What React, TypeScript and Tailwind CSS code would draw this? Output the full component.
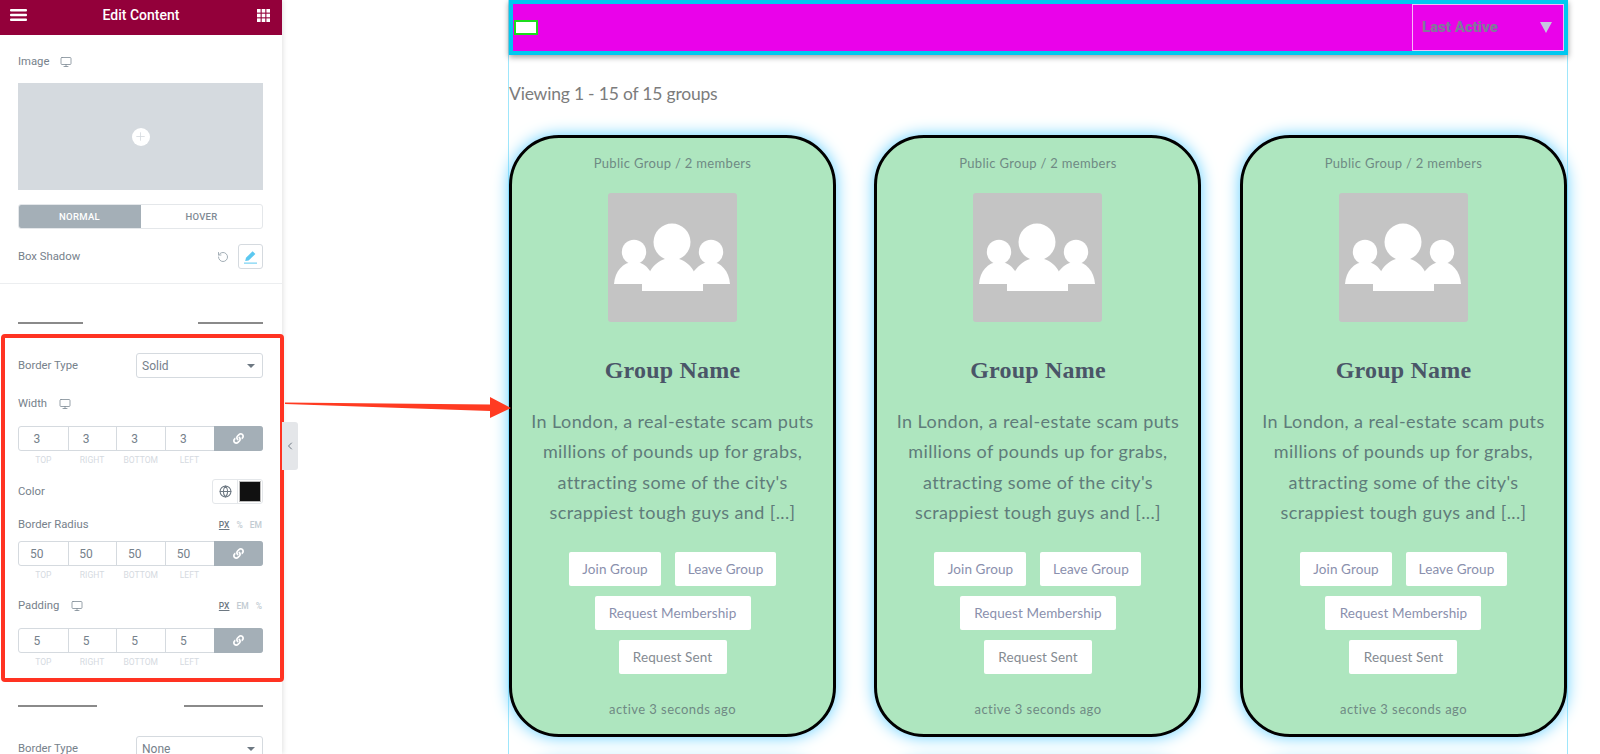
import { Monitor, RotateCcw, Globe, ChevronLeft, Plus } from "lucide-react";
import { FaLink } from "react-icons/fa";

const label = "text-[11.3px] leading-4 text-[#76818b]";

function Dim({ v }: { v: string }) {
  const names = ["TOP", "RIGHT", "BOTTOM", "LEFT"];
  return (
    <div>
      <div className="flex h-[25px] w-[245px] rounded-[3px] border border-[#d5dadf] text-[12px] text-[#76818b]">
        {names.map((n, i) => (
          <div key={n} className={`flex w-[48.7px] items-center justify-center pr-[13px] ${i > 0 ? "border-l border-[#d5dadf]" : ""}`}>
            {v}
          </div>
        ))}
        <div className="-my-px -mr-px flex flex-1 items-center justify-center rounded-r-[3px] bg-[#a4afb7] text-white">
          <FaLink size={11} />
        </div>
      </div>
      <div className="ml-px mt-[4px] flex h-[11px] w-[245px] items-center text-[8.5px] leading-none text-[#d5dadf]">
        {names.map((n) => (
          <div key={n} className="w-[48.7px] text-center">{n}</div>
        ))}
      </div>
    </div>
  );
}

function SelectBox({ v }: { v: string }) {
  return (
    <div className="flex h-[25px] w-[127px] items-center justify-between rounded-[3px] border border-[#d5dadf] pl-[5px] pr-[7px] text-[12px] text-[#76818b]">
      {v}
      <span className="h-0 w-0 border-x-[4px] border-t-[4px] border-x-transparent border-t-[#6d7882]" />
    </div>
  );
}

function Divider({ a, b }: { a: string; b: string }) {
  return (
    <div className="flex justify-between pl-[18px] pr-[19px]">
      <div className={`h-[2px] bg-[#8a8a8a] ${a}`} />
      <div className={`h-[2px] bg-[#8a8a8a] ${b}`} />
    </div>
  );
}

function Units({ items }: { items: string[] }) {
  return (
    <div className="flex gap-[7px] pr-[1px] text-[8.5px] font-medium text-[#c2cbd2]">
      {items.map((u, i) => (
        <span key={u} className={i === 0 ? "text-[#6d7882] underline" : ""}>{u}</span>
      ))}
    </div>
  );
}

function Sidebar() {
  return (
    <aside className="relative z-10 h-[754px] w-[282px] shrink-0 bg-white font-['Roboto',sans-serif] shadow-[1px_0_5px_rgba(0,0,0,0.12)]">
      <header className="flex h-[35px] items-center justify-between bg-[#93003a] pb-[5px] pl-[10px] pr-[12px] text-white">
        <svg width="17" height="12" viewBox="0 0 17 12" fill="white">
          <rect width="17" height="2.4" rx="1" />
          <rect y="4.8" width="17" height="2.4" rx="1" />
          <rect y="9.6" width="17" height="2.4" rx="1" />
        </svg>
        <span className="mr-[2px] text-[14px] font-medium">Edit Content</span>
        <svg width="13" height="13" viewBox="0 0 13 13" fill="white">
          {[0, 4.7, 9.4].flatMap((x) =>
            [0, 4.7, 9.4].map((y) => <rect key={`${x}-${y}`} x={x} y={y} width="3.6" height="3.6" />)
          )}
        </svg>
      </header>

      <div className="pl-[18px] pr-[19px] pt-[19px]">
        <div className={`flex items-center gap-[11px] ${label}`}>
          Image <Monitor size={12} strokeWidth={1.6} className="text-[#7d8a94]" />
        </div>
        <div className="mt-[13px] flex h-[107px] w-[245px] items-center justify-center bg-[#d5dadf]">
          <span className="flex h-[18px] w-[18px] items-center justify-center rounded-full bg-white text-[#d5dadf]">
            <Plus size={13} strokeWidth={1.5} />
          </span>
        </div>
        <div className="mt-[14px] flex h-[25px] w-[245px] overflow-hidden rounded-[3px] border border-[#e4e7ea] text-[9.5px] font-medium tracking-[0.3px]">
          <div className="-my-px -ml-px flex w-[123px] items-center justify-center bg-[#a4afb7] pt-px text-white">NORMAL</div>
          <div className="flex flex-1 items-center justify-center pt-px text-[#7f8a94]">HOVER</div>
        </div>
        <div className="mt-[15px] flex h-[25px] items-center">
          <span className={`flex-1 ${label}`}>Box Shadow</span>
          <RotateCcw size={12} className="mr-[9px] text-[#a4afb7]" />
          <span className="flex h-[25px] w-[25px] items-center justify-center rounded-[3px] border border-[#d5dadf]">
            <svg width="13" height="14" viewBox="0 0 13 14" fill="#5bc8f0">
              <path d="M8.6 1.2 11.4 4 4.6 10.4 1.2 11 2 7.8Z" />
              <rect y="12.6" width="13" height="1" />
            </svg>
          </span>
        </div>
      </div>
      <div className="mt-[14px] h-px bg-[#eceef0]" />
      <div className="mt-[38px]"><Divider a="w-[65px]" b="w-[65px]" /></div>

      <section className="ml-[1px] mt-[10px] h-[348px] w-[283px] rounded-[4px] border-4 border-[#ff3322] pl-[13px] pt-[15px]">
        <div className="flex w-[245px] items-center justify-between">
          <span className={label}>Border Type</span>
          <SelectBox v="Solid" />
        </div>
        <div className={`mt-[18px] flex items-center gap-[12px] ${label}`}>
          Width <Monitor size={12} strokeWidth={1.6} className="text-[#7d8a94]" />
        </div>
        <div className="mt-[14px]"><Dim v="3" /></div>
        <div className="mt-[13px] flex w-[245px] items-center justify-between">
          <span className={label}>Color</span>
          <div className="flex h-[25px] w-[51px] rounded-[3px] border border-[#e4e7ea]">
            <span className="flex w-[25px] items-center justify-center border-r border-[#e4e7ea] text-[#6d7882]">
              <Globe size={13} />
            </span>
            <span className="m-[2px] flex-1 bg-[#111111] ring-1 ring-[#bbbbbb]" />
          </div>
        </div>
        <div className="mt-[13px] flex w-[245px] items-center justify-between">
          <span className={label}>Border Radius</span>
          <Units items={["PX", "%", "EM"]} />
        </div>
        <div className="mt-[8px]"><Dim v="50" /></div>
        <div className="mt-[17px] flex w-[245px] items-center justify-between">
          <span className={`flex items-center gap-[12px] ${label}`}>
            Padding <Monitor size={12} strokeWidth={1.6} className="text-[#7d8a94]" />
          </span>
          <Units items={["PX", "EM", "%"]} />
        </div>
        <div className="mt-[14px]"><Dim v="5" /></div>
      </section>

      <div className="mt-[23px]"><Divider a="w-[79px]" b="w-[79px]" /></div>
      <div className="mt-[29px] flex items-center justify-between pl-[18px] pr-[19px]">
        <span className={label}>Border Type</span>
        <SelectBox v="None" />
      </div>

      <div className="absolute left-[282px] top-[422px] flex h-[48px] w-[16px] items-center justify-center rounded-r-[3px] bg-[#e4e6e9] text-[#6d7882]">
        <ChevronLeft size={12} />
      </div>
    </aside>
  );
}

function GroupIcon() {
  return (
    <div className="h-[129px] w-[129px] rounded-[3px] bg-[#c4c4c4]">
      <svg width="129" height="129" viewBox="0 0 129 129" fill="white">
        <circle cx="64" cy="49" r="18.5" />
        <circle cx="26" cy="59" r="12.2" />
        <circle cx="103" cy="59" r="12.2" />
        <path d="M6 91C7 78 15 69 26 69C33 69 38 72 42 78L45 91Z" />
        <path d="M122 91C121 78 113 69 103 69C96 69 91 72 86 78L83 91Z" />
        <path d="M34 98V91H38C40 75 51 65 64 65C77 65 88 75 90 91H95V98Z" />
      </svg>
    </div>
  );
}

function Btn({ t, c = "text-[#8a90ad]", w }: { t: string; c?: string; w: string }) {
  return (
    <div className={`flex h-[33.5px] items-center justify-center rounded-[2px] bg-white text-[13.5px] tracking-[0.1px] ${c} ${w}`}>{t}</div>
  );
}

function Card() {
  return (
    <article className="flex h-[602px] w-[327px] flex-col items-center rounded-[50px] border-[3px] border-black bg-[#aee6bf] pt-[16px] shadow-[0_0_16px_#62cfff]">
      <p className="text-[13px] leading-[18px] tracking-[0.32px] text-[#6f8a84]">Public Group / 2 members</p>
      <div className="mt-[21px]"><GroupIcon /></div>
      <h2 className="mt-[32px] font-['Liberation_Serif',serif] text-[24px] font-bold leading-8 tracking-[0.2px] text-[#4a5568]">Group Name</h2>
      <p className="mt-[20px] text-center text-[18px] leading-[30.3px] tracking-[0.4px] text-[#5f7c7a]">
        In London, a real-estate scam puts<br />
        millions of pounds up for grabs,<br />
        attracting some of the city's<br />
        scrappiest tough guys and [...]
      </p>
      <div className="mt-[25px] flex flex-col items-center gap-[10.5px]">
        <div className="flex gap-[14px]">
          <Btn t="Join Group" w="w-[92px]" />
          <Btn t="Leave Group" w="w-[101px]" />
        </div>
        <Btn t="Request Membership" w="w-[156px]" />
        <Btn t="Request Sent" c="text-[#858b92]" w="w-[108px]" />
      </div>
      <p className="mt-[26px] text-[13px] leading-[18px] tracking-[0.45px] text-[#6f8a84]">active 3 seconds ago</p>
    </article>
  );
}

function NextCard() {
  return <div className="h-[602px] w-[327px] rounded-[50px] border-[3px] border-black bg-[#aee6bf] shadow-[0_0_16px_#62cfff]" />;
}

export default function App() {
  return (
    <div className="relative flex h-[754px] w-[1600px] overflow-hidden bg-white font-['Lato',sans-serif]">
      <Sidebar />
      <main className="ml-[226px] w-[1060px] border-x border-[#9fe6fb]">
        <div className="flex h-[55px] w-[1059px] items-center justify-between border-4 border-[#00c8f0] bg-[#ea02ea] shadow-[0_2px_6px_rgba(0,0,0,0.4)]">
          <span className="ml-[1px] h-[15px] w-[24px] border-[2.5px] border-[#1cdc1c] bg-white" />
          <div className="flex h-[47px] w-[152px] items-center justify-between border border-[#f7b6f7] pl-[9px] pr-[11px] font-['Roboto',sans-serif] text-[15px] font-black text-[#80789a]">
            Last Active
            <span className="h-0 w-0 border-x-[6px] border-t-[11px] border-x-transparent border-t-[#c6c6df]" />
          </div>
        </div>
        <p className="mt-[25px] text-[17.5px] leading-[27px] tracking-[-0.2px] text-[#7c7c7c]">Viewing 1 - 15 of 15 groups</p>
        <div className="mt-[28px] grid w-[1058px] grid-cols-3 gap-y-[25px]">
          <div className="justify-self-start"><Card /></div>
          <div className="justify-self-center"><Card /></div>
          <div className="justify-self-end"><Card /></div>
          <div className="justify-self-start"><NextCard /></div>
          <div className="justify-self-center"><NextCard /></div>
          <div className="justify-self-end"><NextCard /></div>
        </div>
      </main>
      <svg className="absolute left-[283px] top-[395px] z-20" width="230" height="26" viewBox="0 0 230 26" fill="#ff3b22">
        <path d="M2 7.5 207 9.5V2L228 13L207 23V16L2 9Z" />
      </svg>
    </div>
  );
}
